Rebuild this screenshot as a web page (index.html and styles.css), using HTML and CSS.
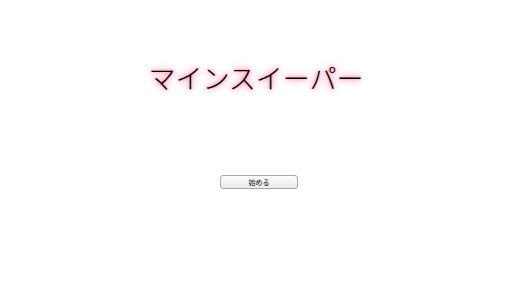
FILE: index.html
```html
<!DOCTYPE html>
<html lang="ja">
<head>
<meta charset="utf-8">
<link rel="stylesheet" href="styles.css">
</head>
<body>
<main class="screen">
  <h1 class="title">マインスイーパー</h1>
  <button class="start">始める</button>
</main>
</body>
</html>
```
FILE: styles.css
```css
html, body {
  margin: 0;
  padding: 0;
  background: #ffffff;
}
.screen {
  display: flex;
  flex-direction: column;
  align-items: center;
  padding-top: 60px;
  font-family: "Noto Sans CJK JP", sans-serif;
}
.title {
  margin: 0;
  font-size: 27px;
  font-weight: 300;
  line-height: 36px;
  color: #000000;
  text-shadow: 0 0 3px #ff7ea0, 0 0 6px #ff6a90, 0 0 11px #ffb8ca;
}
.start {
  margin-top: 79px;
  margin-left: 6px;
  width: 78px;
  height: 14px;
  padding: 0;
  font-family: "Noto Sans CJK JP", sans-serif;
  font-size: 7px;
  line-height: 12px;
  color: #111;
  background: linear-gradient(#fbfbfb, #ececec);
  border: 1px solid #a8a8a8;
  border-radius: 3px;
}
```
